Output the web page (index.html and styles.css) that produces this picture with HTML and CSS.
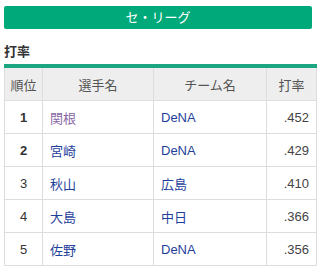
FILE: index.html
```html
<!DOCTYPE html>
<html lang="ja">
<head>
<meta charset="utf-8">
<link rel="stylesheet" href="styles.css">
</head>
<body>
<div class="wrap">
  <div class="league">セ・リーグ</div>
  <h2 class="title">打率</h2>
  <table class="rank">
    <thead>
      <tr><th class="c1">順位</th><th class="c2">選手名</th><th class="c3">チーム名</th><th class="c4">打率</th></tr>
    </thead>
    <tbody>
      <tr><td class="c1 b">1</td><td class="c2"><a class="visited">関根</a></td><td class="c3"><a>DeNA</a></td><td class="c4">.452</td></tr>
      <tr><td class="c1 b">2</td><td class="c2"><a>宮崎</a></td><td class="c3"><a>DeNA</a></td><td class="c4">.429</td></tr>
      <tr><td class="c1">3</td><td class="c2"><a>秋山</a></td><td class="c3"><a>広島</a></td><td class="c4">.410</td></tr>
      <tr><td class="c1">4</td><td class="c2"><a>大島</a></td><td class="c3"><a>中日</a></td><td class="c4">.366</td></tr>
      <tr><td class="c1">5</td><td class="c2"><a>佐野</a></td><td class="c3"><a>DeNA</a></td><td class="c4">.356</td></tr>
    </tbody>
  </table>
</div>
</body>
</html>
```
FILE: styles.css
```css
body {
  margin: 0;
  background: #fff;
  font-family: "Liberation Sans", Arial, "Noto Sans CJK JP", sans-serif;
  color: #333;
}
.wrap {
  width: 308px;
  margin: 6px 0 0 4px;
}
.league {
  height: 23px;
  line-height: 23px;
  background: #00a97a;
  color: #fff;
  text-align: center;
  font-size: 13px;
  border-radius: 2px;
}
.title {
  margin: 14px 0 0 0;
  font-size: 13px;
  font-weight: bold;
  line-height: 18px;
  height: 18px;
  color: #333;
}
.rank {
  margin-top: 3px;
  width: 308px;
  border-collapse: collapse;
  border-top: 4px solid #1ba580;
  font-size: 13px;
  table-layout: fixed;
}
.rank th, .rank td {
  border: 1px solid #dddddd;
  height: 32px;
  padding: 0;
}
.rank thead th {
  background: #eeeeee;
  font-weight: normal;
  color: #555;
  text-align: center;
  border-top: none;
}
.rank .c1 { width: 37px; }
.rank .c2 { width: 110px; }
.rank .c3 { width: 112px; }
.rank .c4 { width: 49px; }
.rank td.c1 {
  text-align: center;
  color: #333;
}
.rank td.b { font-weight: bold; }
.rank td.c2, .rank td.c3 {
  padding-left: 7px;
}
.rank td.c4 {
  text-align: right;
  padding-right: 7px;
  color: #444;
}
.rank a {
  color: #1f3f9b;
  text-decoration: none;
}
.rank a.visited {
  color: #8a6aa6;
}
```
